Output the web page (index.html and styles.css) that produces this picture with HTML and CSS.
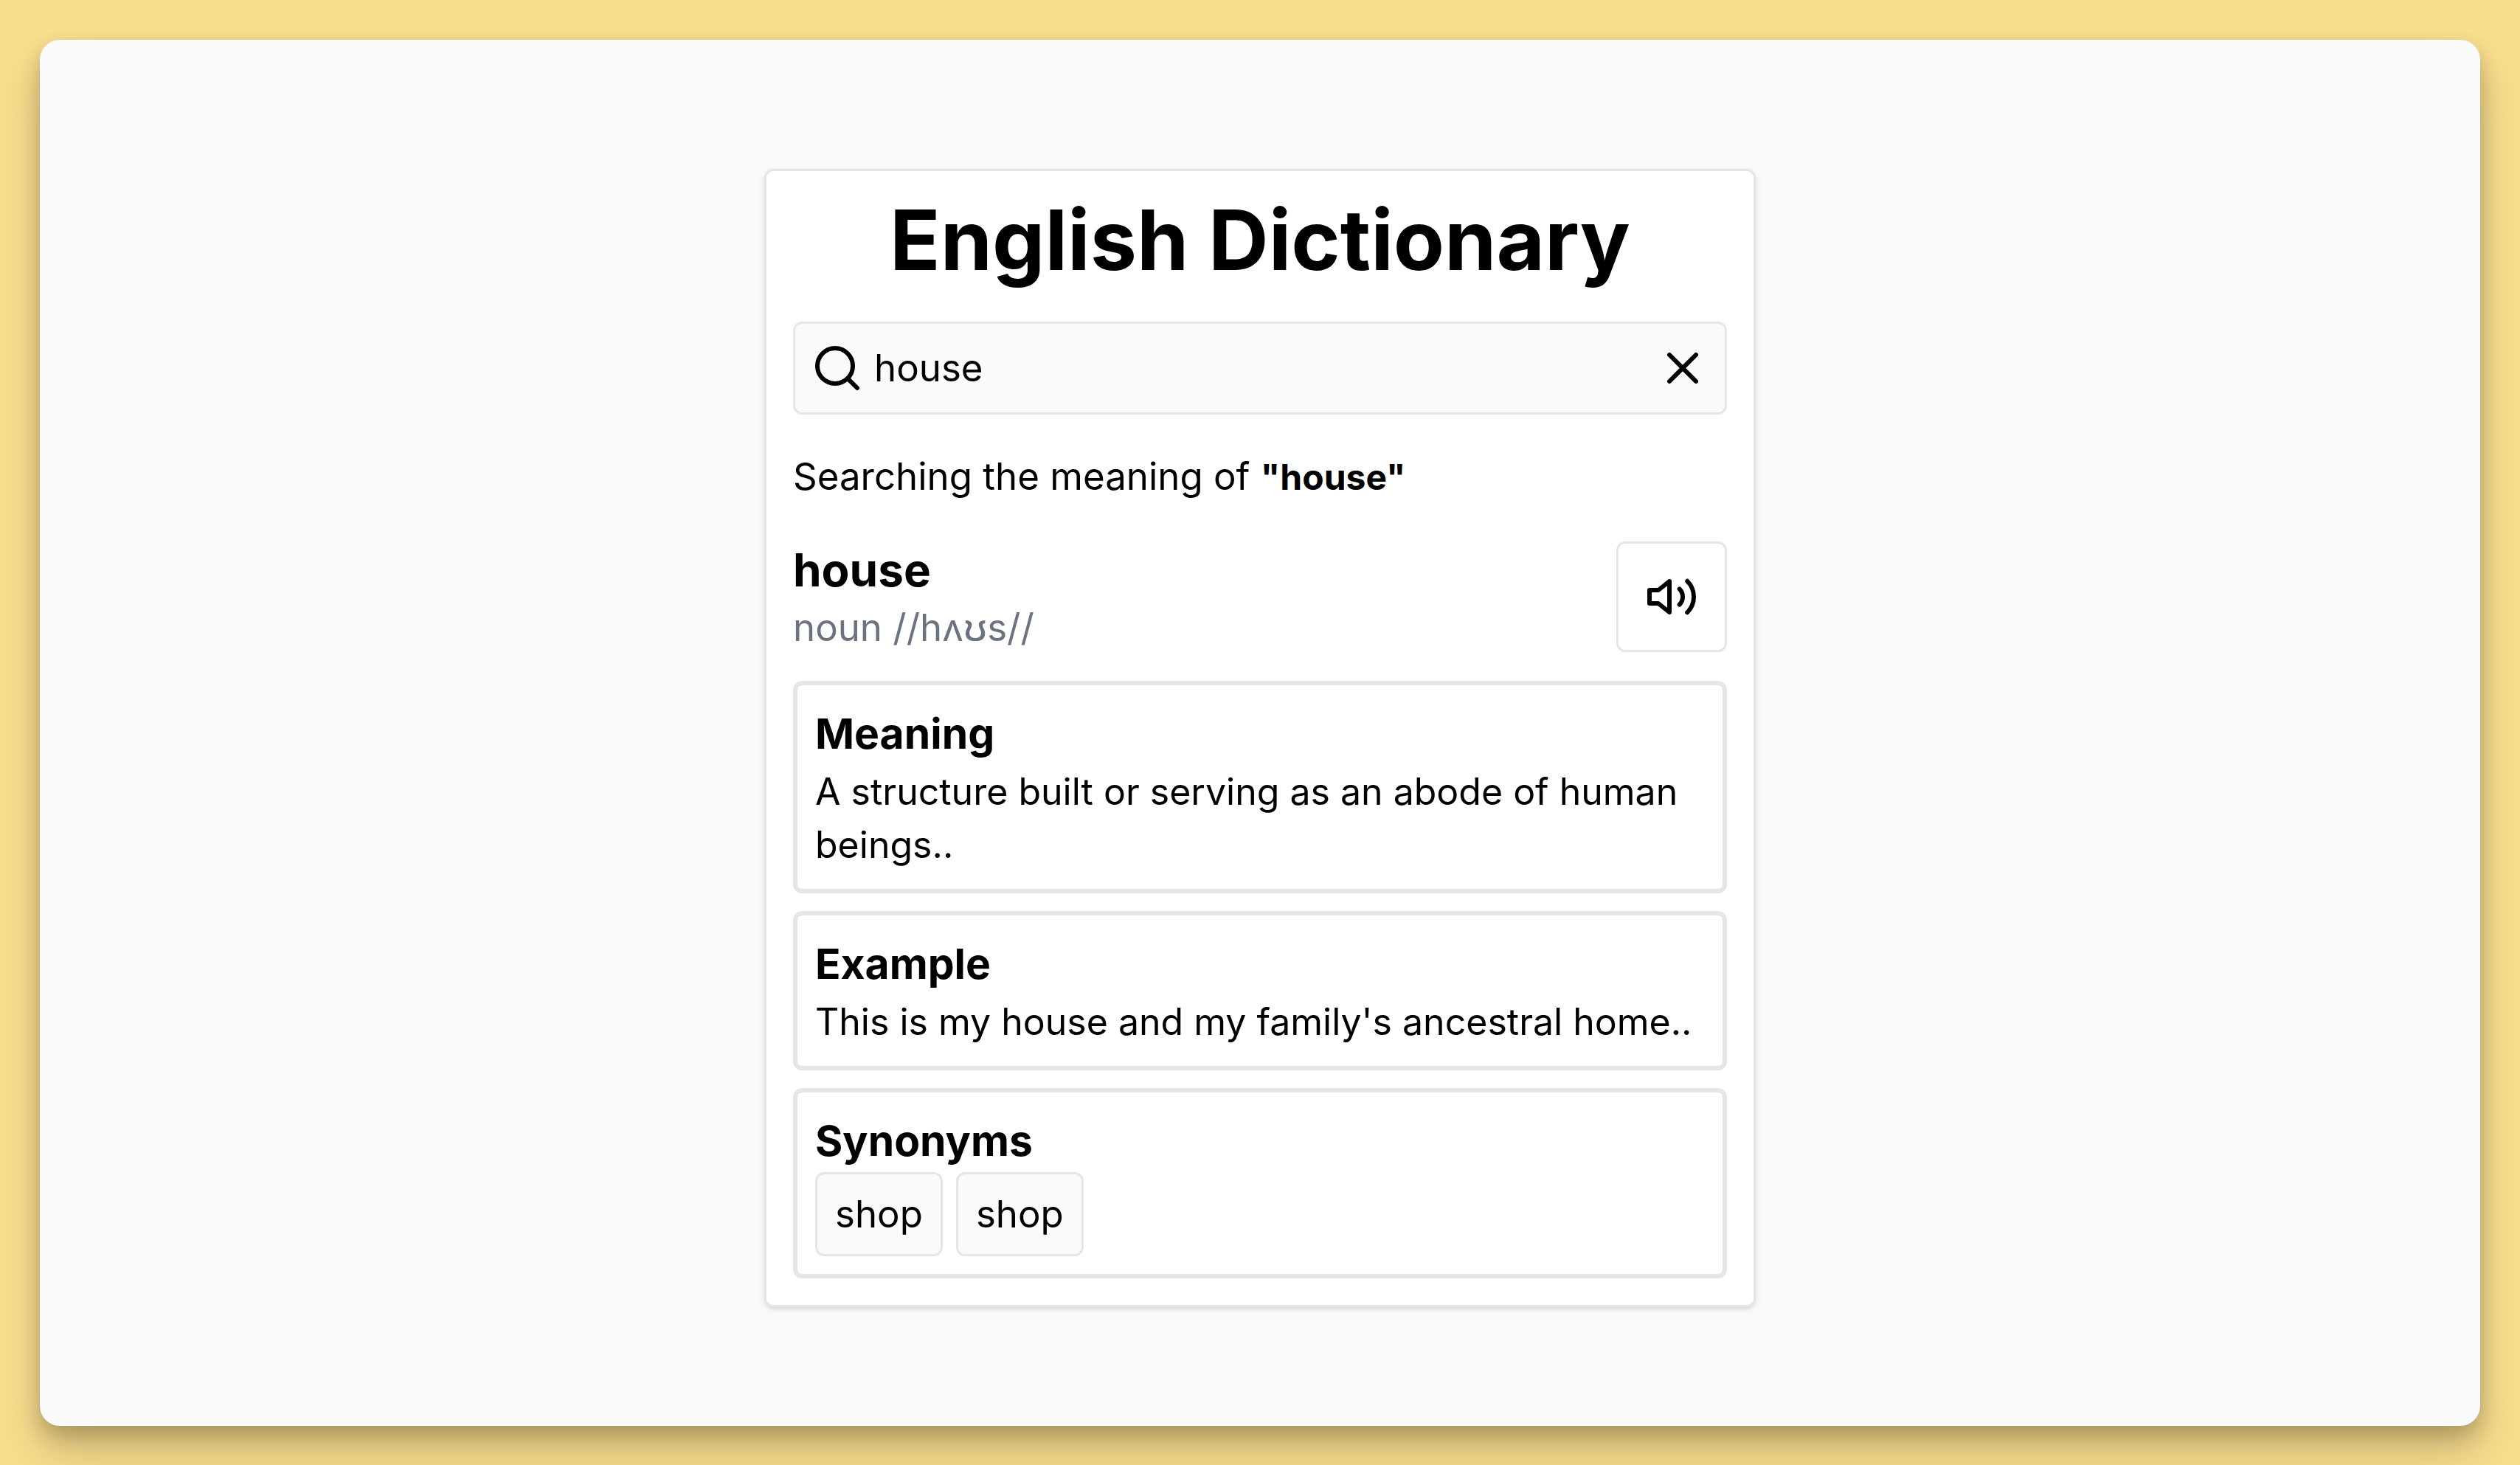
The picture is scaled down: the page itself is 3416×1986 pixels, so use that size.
FILE: index.html
```html
<!DOCTYPE html>
<html lang="en">
<head>
  <meta charset="utf-8">
  <meta name="viewport" content="width=device-width, initial-scale=1">
  <title>English Dictionary</title>
  <link rel="stylesheet" href="styles.css">
</head>
<body>
  <main class="stage">
    <section class="dictionary">
      <h1 class="title">English Dictionary</h1>

      <form class="search" role="search">
        <label class="search-label" for="word">
          <svg class="icon" viewBox="0 0 24 24" role="img" aria-label="Search a word">
            <circle cx="11" cy="11" r="8"/>
            <path d="m21 21-4.3-4.3"/>
          </svg>
        </label>
        <input class="search-input" id="word" type="text" value="house">
        <button class="clear" type="reset" aria-label="Clear">
          <svg class="icon" viewBox="0 0 24 24" aria-hidden="true">
            <path d="M18 6 6 18M6 6l12 12"/>
          </svg>
        </button>
      </form>

      <p class="status">Searching the meaning of <strong class="query">"house"</strong></p>

      <div class="entry">
        <div>
          <h2 class="word">house</h2>
          <p class="phonetic">noun //hʌʊs//</p>
        </div>
        <button class="listen" type="button" aria-label="Listen">
          <svg class="icon" viewBox="0 0 24 24" aria-hidden="true">
            <path d="M11 5 6 9H2v6h4l5 4V5z"/>
            <path d="M15.54 8.46a5 5 0 0 1 0 7.07"/>
            <path d="M19.07 4.93a10 10 0 0 1 0 14.14"/>
          </svg>
        </button>
      </div>

      <div class="details">
        <article class="detail">
          <h3 class="detail-title">Meaning</h3>
          <p class="detail-text">A structure built or serving as an abode of human beings..</p>
        </article>
        <article class="detail">
          <h3 class="detail-title">Example</h3>
          <p class="detail-text">This is my house and my family's ancestral home..</p>
        </article>
        <article class="detail">
          <h3 class="detail-title">Synonyms</h3>
          <ul class="synonyms">
            <li class="synonym">shop</li>
            <li class="synonym">shop</li>
          </ul>
        </article>
      </div>
    </section>
  </main>
</body>
</html>
```

FILE: styles.css
```css
*,
*::before,
*::after {
  box-sizing: border-box;
}

:root {
  --line: #e6e6e8;
  --soft: #f9fafc;
  --muted: #6b7280;
}

body {
  display: flex;
  min-height: 100vh;
  margin: 0;
  padding: 54px;
  background: #f9de8e;
  color: #000;
  font-family: Inter, "Noto Sans", sans-serif;
  font-size: 51px;
  line-height: 72px;
}

h1,
h2,
h3,
p,
ul {
  margin: 0;
  padding: 0;
}

button,
input {
  color: inherit;
  font: inherit;
}

.stage {
  display: flex;
  flex: 1;
  flex-direction: column;
  align-items: center;
  padding: 175px 36px 161px;
  border-radius: 27px;
  background: #fafafa;
  box-shadow: 0 14px 28px rgba(0, 0, 0, 0.2), 0 36px 64px rgba(0, 0, 0, 0.17);
}

.dictionary {
  width: 100%;
  max-width: 1344px;
  padding: 36px;
  border: 3px solid var(--line);
  border-radius: 12px;
  background: #fff;
  box-shadow: 0 3px 9px rgba(0, 0, 0, 0.1), 0 3px 6px -3px rgba(0, 0, 0, 0.1);
}

.title {
  margin-bottom: 54px;
  font-size: 113px;
  font-weight: 700;
  line-height: 114px;
  text-align: center;
}

.icon {
  display: block;
  width: 72px;
  height: 72px;
  fill: none;
  stroke: currentColor;
  stroke-width: 2;
  stroke-linecap: round;
  stroke-linejoin: round;
}

.search {
  display: flex;
  align-items: center;
  gap: 14px;
  padding: 24px 21px;
  border: 3px solid var(--line);
  border-radius: 12px;
  background: var(--soft);
}

.search-input {
  flex: 1;
  min-width: 0;
  height: 72px;
  padding: 0;
  border: 0;
  background: transparent;
  outline: 0;
}

.clear {
  padding: 0;
  border: 0;
  background: transparent;
}

.status {
  margin: 48px 0;
}

.query {
  font-size: 48px;
  font-weight: 700;
}

.entry {
  display: flex;
  align-items: center;
  justify-content: space-between;
  margin-bottom: 36px;
}

.word {
  font-size: 62px;
  font-weight: 700;
  line-height: 84px;
}

.phonetic {
  color: var(--muted);
}

.listen {
  padding: 36px;
  border: 3px solid var(--line);
  border-radius: 12px;
  background: transparent;
}

.details {
  display: flex;
  flex-direction: column;
  gap: 24px;
}

.detail {
  padding: 24px;
  border: 6px solid var(--line);
  border-radius: 12px;
}

.detail-title {
  font-size: 57px;
  font-weight: 700;
  line-height: 84px;
}

.detail-text {
  font-size: 50px;
}

.synonyms {
  display: flex;
  flex-wrap: wrap;
  gap: 18px;
  list-style: none;
}

.synonym {
  padding: 18px 24px;
  border: 3px solid var(--line);
  border-radius: 12px;
  background: var(--soft);
}
```
